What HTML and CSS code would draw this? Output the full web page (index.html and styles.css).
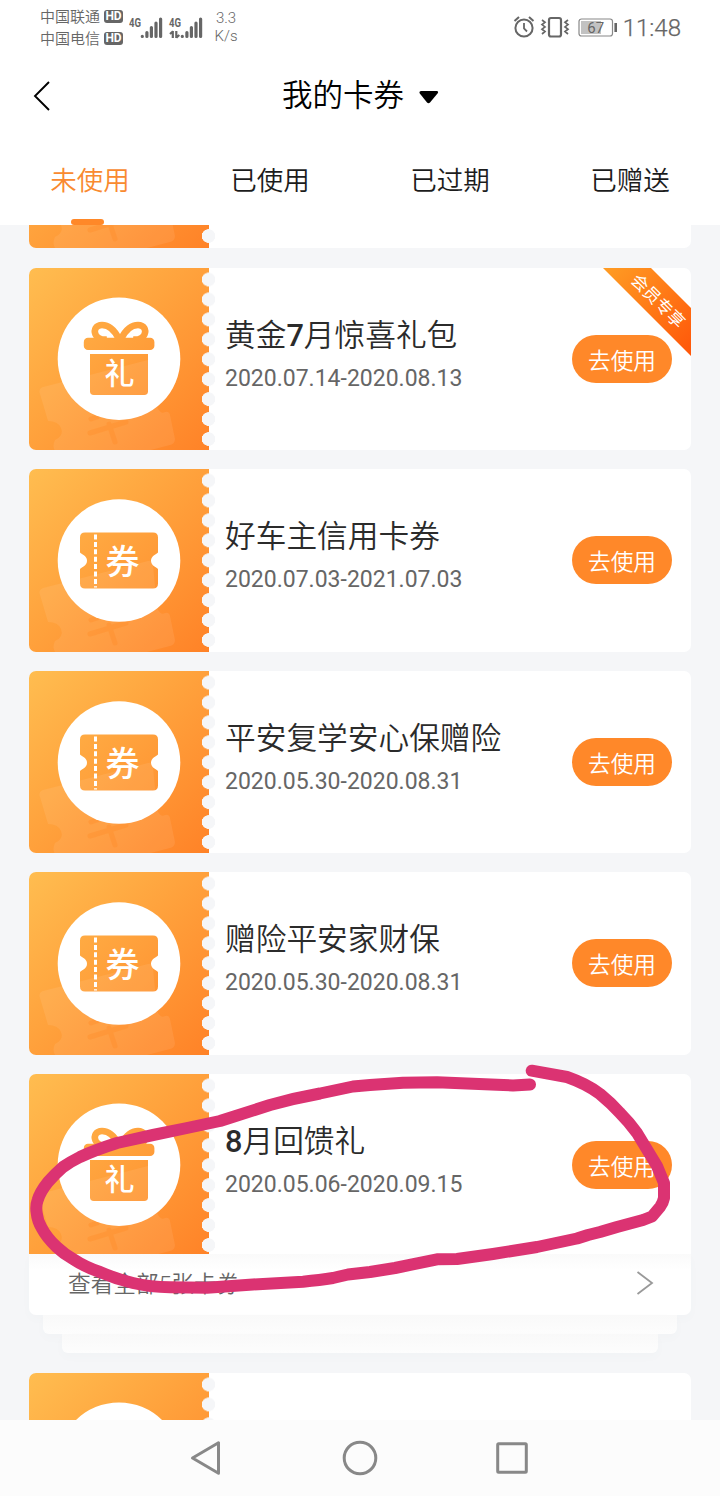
FILE: index.html
```html
<!DOCTYPE html>
<html lang="zh-CN">
<head>
<meta charset="utf-8">
<title>我的卡券</title>
<link rel="stylesheet" href="styles.css">
</head>
<body>
<svg class="defs" width="0" height="0" aria-hidden="true">
  <defs>
    <linearGradient id="orange" x1="0" y1="0" x2="1" y2="1">
      <stop offset="0" stop-color="#ffbd50"/><stop offset=".5" stop-color="#ffa03b"/><stop offset="1" stop-color="#ff8227"/>
    </linearGradient>
    <mask id="gift-cut" maskUnits="userSpaceOnUse" x="0" y="0" width="180" height="183">
      <circle cx="90" cy="90.700" r="61.3" fill="#fff"/>
      <rect x="54.8" y="69.700" width="70.6" height="12.4" rx="4.2" fill="#000"/>
      <path d="M61 86H119V123.200Q119 127 115.200 127H64.800Q61 127 61 123.200Z" fill="#000"/>
      <path d="M90 71C85 61 79 57 73 57C67 57 64.500 62 66.500 66.500C68 70 72 72 78 71.500M92 71C97 61 103 57 109 57C115 57 117.500 62 115.500 66.500C114 70 110 72 104 71.500" fill="none" stroke="#000" stroke-width="6.600"/>
    </mask>
    <mask id="coupon-cut" maskUnits="userSpaceOnUse" x="0" y="0" width="180" height="183">
      <circle cx="90" cy="91.500" r="61.3" fill="#fff"/>
      <path d="M56 63.500H124Q129 63.500 129 68.500V83.500C127 85.500 122 87 122 91.700S127 98 129 100V114.500Q129 119.500 124 119.500H56Q51 119.500 51 114.500V100C53 98 58 96.500 58 91.700S53 85.500 51 83.500V68.500Q51 63.500 56 63.500Z" fill="#000"/>
      <path d="M66.500 65.500V118.500" stroke="#fff" stroke-width="3" stroke-dasharray="5 2.400"/>
    </mask>
    <symbol id="stub-base" viewBox="0 0 180 183">
      <rect width="180" height="183" fill="url(#orange)"/>
      <path d="M14 119L119 92Q123 91 124 96L128 139Q132 147 136 144Q140 143 141 147L146 171Q146 176 141 177L118 183H26Q23 178 26 172Q35 168 32 160Q29 153 19 153L11 126Q9 121 14 119Z" fill="#fff" opacity=".08"/>
      <path d="M61 165L97 154M80 156L86 174M62 151L68 149" fill="none" stroke="#ff8a25" stroke-width="5" stroke-linecap="round" opacity=".35"/>
    </symbol>
    <symbol id="gift" viewBox="0 0 180 183">
      <use href="#stub-base" width="180" height="183"/>
      <rect width="180" height="183" fill="#fff" mask="url(#gift-cut)"/>
      <text x="90.500" y="116" class="badge-char gift-char">礼</text>
    </symbol>
    <symbol id="coupon" viewBox="0 0 180 183">
      <use href="#stub-base" width="180" height="183"/>
      <rect width="180" height="183" fill="#fff" mask="url(#coupon-cut)"/>
      <text x="93.500" y="104.500" class="badge-char coupon-char">券</text>
    </symbol>
  </defs>
</svg>

<div class="screen">
  <header class="status">
    <div class="carriers">
      <div class="carrier">中国联通<span class="hd">HD</span></div>
      <div class="carrier">中国电信<span class="hd">HD</span></div>
    </div>
    <svg class="signals" width="74" height="26" viewBox="0 0 74 26">
      <text x="0" y="12" class="net" textLength="12" lengthAdjust="spacingAndGlyphs">4G</text><text x="40" y="12" class="net" textLength="12" lengthAdjust="spacingAndGlyphs">4G</text>
      <g stroke="#666" stroke-width="3.200" stroke-linecap="round">
        <path d="M13.300 21.300v.2M17.900 17.500v4M22.400 12.500v9M27 8v13.500M31.600 4v17.500"/>
        <path d="M53.300 21.300v.2M57.900 17.500v4M62.400 12.500v9M67 8v13.500M71.600 4v17.500"/>
      </g>
      <path d="M43.800 16v7M41 19L44 16.300M47.300 16v7M50.300 20L47.300 22.700" fill="none" stroke="#666" stroke-width="2.200"/>
    </svg>
    <div class="speed"><span>3.3</span><span>K/s</span></div>
    <svg class="sysicons" width="106" height="24" viewBox="0 0 106 24" fill="none" stroke="#666">
      <circle cx="11" cy="13" r="8.600" stroke-width="2"/>
      <path d="M11 8V13.500L14 16.500" stroke-width="1.800"/><path d="M1.500 6L6 2M16 2L20.500 6" stroke-width="2"/>
      <rect x="36" y="3" width="12" height="18.500" rx="2" stroke-width="2.200"/>
      <path d="M29 5l3 2.300-3 2.300 3 2.300-3 2.300 3 2.300-3 2.500M55 5l-3 2.300 3 2.300-3 2.300 3 2.300-3 2.300 3 2.500" stroke-width="1.700"/>
      <rect x="66" y="4" width="33.500" height="17" rx="2.500" stroke="#888" stroke-width="1.200"/>
      <rect x="68" y="6" width="20" height="13" fill="#c2c2c2" stroke="none"/>
      <path d="M102.700 8v9" stroke-width="2.600"/>
      <text x="82.800" y="18.300" class="battery">67</text>
    </svg>
    <div class="clock">11:48</div>
  </header>

  <div class="titlebar">
    <svg class="back" width="18" height="32" viewBox="0 0 18 32"><path d="M16 2L2 16L16 30" fill="none" stroke="#000" stroke-width="1.900"/></svg>
    <h1>我的卡券</h1>
    <svg class="caret" width="20" height="14" viewBox="0 0 20 14"><path d="M2 1H18Q20 1.500 18.500 3.500L11 12.500Q9.500 14 8 12.500L.8 3.500Q-.3 1.500 2 1Z"/></svg>
  </div>

  <nav class="tabs">
    <span class="tab active">未使用</span><span class="tab">已使用</span><span class="tab">已过期</span><span class="tab">已赠送</span>
  </nav>

  <main class="list">
    <article class="card previous"><div class="stub"><svg class="art"><use href="#coupon"/></svg></div><div class="teeth"></div></article>

    <article class="card short">
      <div class="stub"><svg class="art"><use href="#gift"/></svg></div><div class="teeth"></div>
      <div class="info"><h2>黄金<b>7</b>月惊喜礼包</h2><time>2020.07.14-2020.08.13</time></div>
      <button class="use">去使用</button>
      <div class="ribbon"><span>会员专享</span></div>
    </article>

    <article class="card">
      <div class="stub"><svg class="art"><use href="#coupon"/></svg></div><div class="teeth"></div>
      <div class="info"><h2>好车主信用卡券</h2><time>2020.07.03-2021.07.03</time></div>
      <button class="use">去使用</button>
    </article>

    <article class="card short">
      <div class="stub"><svg class="art"><use href="#coupon"/></svg></div><div class="teeth"></div>
      <div class="info"><h2>平安复学安心保赠险</h2><time>2020.05.30-2020.08.31</time></div>
      <button class="use">去使用</button>
    </article>

    <article class="card">
      <div class="stub"><svg class="art"><use href="#coupon"/></svg></div><div class="teeth"></div>
      <div class="info"><h2>赠险平安家财保</h2><time>2020.05.30-2020.08.31</time></div>
      <button class="use">去使用</button>
    </article>

    <section class="stack">
      <article class="card joined">
        <div class="stub"><svg class="art"><use href="#gift"/></svg></div><div class="teeth"></div>
        <div class="info"><h2><b>8</b>月回馈礼</h2><time>2020.05.06-2020.09.15</time></div>
        <button class="use">去使用</button>
      </article>
      <div class="more"><span>查看全部5张卡券</span><svg width="18" height="26" viewBox="0 0 18 26"><path d="M1.500 2L16 13L1.500 24" fill="none" stroke="#999" stroke-width="1.800"/></svg></div>
      <div class="layer"></div>
      <div class="layer deep"></div>
    </section>

    <article class="card next"><div class="stub"><svg class="art"><use href="#gift"/></svg></div><div class="teeth"></div></article>
  </main>

  <footer class="sysnav">
    <svg width="32" height="36" viewBox="0 0 32 36"><path d="M2.500 18L28.500 2.700V33.300Z"/></svg>
    <svg width="36" height="36" viewBox="0 0 36 36"><circle cx="18" cy="18" r="15.800"/></svg>
    <svg class="recent" width="32" height="36" viewBox="0 0 32 36"><rect x="1.700" y="3.700" width="28.600" height="28.600" rx="1"/></svg>
  </footer>

  <svg class="marker" width="720" height="1496" viewBox="0 0 720 1496">
    <path d="M530 1084.500L513 1085.500L497 1084.700L437 1082.300L403 1082.700L370 1085L353 1086.500L320 1093.500Q295 1098 270 1105L220 1121L187 1128L153 1135L117 1143Q95 1150 80 1157Q70 1162 63 1167Q55 1174 48 1182Q40 1192 37.700 1200Q35.500 1206 36.700 1213Q37.500 1221 41.700 1228Q47 1238 56.700 1247Q64 1254 73 1259Q85 1267 100 1272Q116 1279 133 1283Q150 1287 170 1287.300L207 1287.700L253 1284.500L303 1281.700Q320 1280 333 1278L348 1274.500L370 1272L395 1268L437 1259.300L457 1259L493 1254L537 1247L577 1238.500L588 1235L600 1232L617 1227L643 1220L652 1216.500L660 1207Q663 1203 664 1198V1183L657 1166L637 1133Q629 1122 620 1113Q611 1103 600 1094Q587 1084 567 1077L531.700 1070.700"/>
  </svg>
</div>
</body>
</html>
```

FILE: styles.css
```css
* { box-sizing: border-box; }
body { margin: 0; font-family: Roboto, "Noto Sans CJK SC", sans-serif; }
h1, h2 { margin: 0; font-weight: 350; }
svg { display: block; flex: none; }
.defs { position: absolute; }
.screen { position: relative; width: 720px; height: 1496px; overflow: hidden; display: flex; flex-direction: column; background: #fff; }

.status { height: 56px; flex: none; display: flex; align-items: flex-start; padding: 6px 39px 0 40px; color: #666; }
.carriers { width: 89px; display: flex; flex-direction: column; }
.carrier { display: flex; align-items: center; gap: 4px; height: 22px; font-size: 15px; line-height: 20px; padding-bottom: 1px; font-weight: 350; white-space: nowrap; }
.hd { width: 19px; height: 13px; border-radius: 3px; background: #666; color: #fff; font-size: 12px; line-height: 13.500px; font-weight: 700; text-align: center; }
.signals { margin-top: 9px; }
.net { font: 700 13px Roboto, sans-serif; fill: #666; }
.speed { width: 24px; margin: 3px 0 0 11px; display: flex; flex-direction: column; align-items: center; font-size: 15px; line-height: 18px; font-weight: 300; }
.sysicons { margin: 9px 0 0 auto; }
.battery { font: 400 15px Roboto, sans-serif; fill: #666; stroke: none; text-anchor: middle; }
.clock { margin: 8px 0 0 4px; font-size: 24px; line-height: 28px; font-weight: 300; -webkit-text-stroke: .25px #666; }

.titlebar { height: 80px; flex: none; display: flex; align-items: center; padding-left: 33px; }
.titlebar h1 { margin-left: 231px; font-size: 30.500px; line-height: 40px; color: #000; }
.caret { margin-left: 15px; margin-top: 1px; }

.tabs { height: 89px; flex: none; display: grid; grid-template-columns: repeat(4, 1fr); color: #1c1c1c; }
.tab { display: flex; flex-direction: column; align-items: center; justify-content: space-between; padding-top: 25px; font-size: 26.500px; line-height: 40px; font-weight: 350; }
.active { color: #f98a30; }
.active::after { content: ""; width: 33px; height: 6px; margin-right: 5px; border-radius: 3px; background: #ff8828; }

.list { height: 1195px; flex: none; overflow: hidden; padding: 0 29px; display: flex; flex-direction: column; gap: 19px; background: #f5f6f8; }
.card { position: relative; flex: none; display: flex; height: 183px; border-radius: 7px; overflow: hidden; background: #fff; }
.short { height: 182px; }
.previous { margin-top: -160px; margin-bottom: 1px; }
.next { margin-top: 1px; }
.stub { width: 180px; overflow: hidden; flex: none; }
.art { width: 180px; height: 183px; }
.teeth { width: 14px; margin-left: -7px; flex: none; background: radial-gradient(circle at 6.500px 10px, #f5f6f8 6.500px, transparent 7px) 0 1.500px / 14px 19.950px repeat-y; }
.info { flex: 1; padding: 45px 0 0 9px; display: flex; flex-direction: column; }
.info h2 { font-size: 30.700px; line-height: 46px; color: #2b2b2b; white-space: nowrap; }
.info b { font-weight: 500; }
.info time { font-size: 23px; line-height: 28px; margin-top: 6px; color: #666; white-space: nowrap; }
.use { width: 100px; height: 48px; margin: 67px 19px 0 0; padding: 2px 0 0; flex: none; border: 0; border-radius: 24px; background: #ff8829; color: #fff; font: 350 22.700px/46px "Noto Sans CJK SC", sans-serif; white-space: nowrap; }

.badge-char { font-family: "Noto Sans CJK SC", sans-serif; fill: #fff; text-anchor: middle; }
.gift-char { font-size: 30px; font-weight: 500; }
.coupon-char { font-size: 34px; font-weight: 500; }

.ribbon { position: absolute; top: 0; right: 0; width: 88px; height: 88px; display: flex; align-items: center; justify-content: center; background: linear-gradient(135deg, #ff9d24, #ff5609); clip-path: polygon(0 0, 48px 0, 88px 40px, 88px 88px); color: #fff; font-size: 17px; line-height: 20px; }
.ribbon span { transform: translate(11px, -11px) rotate(45deg); white-space: nowrap; }

.stack { display: flex; flex-direction: column; align-items: center; flex: none; }
.joined { width: 662px; height: 180px; border-radius: 7px 7px 0 0; }
.more { width: 662px; height: 61px; padding: 0 37px 4px 39px; display: flex; align-items: center; justify-content: space-between; border-radius: 0 0 7px 7px; background: linear-gradient(#fafafa, #fff 16px); box-shadow: 0 4px 10px rgba(100, 110, 120, .025); color: #666; font-size: 22.700px; font-weight: 350; }
.layer { width: 634px; height: 19px; border-radius: 0 0 6px 6px; background: linear-gradient(#f9f9f9, #fdfdfd); box-shadow: 0 4px 10px rgba(100, 110, 120, .025); }
.deep { width: 596px; }

.sysnav { height: 76px; flex: none; display: flex; align-items: center; justify-content: center; gap: 120px; padding-right: 3px; background: #fcfcfc; }
.sysnav svg { fill: none; stroke: #888; stroke-width: 3; stroke-linejoin: round; }
.sysnav .recent { margin-left: -2px; }

.marker { position: absolute; left: 0; top: 0; fill: none; stroke: #db3372; stroke-width: 12; stroke-linecap: round; stroke-linejoin: round; }
```
